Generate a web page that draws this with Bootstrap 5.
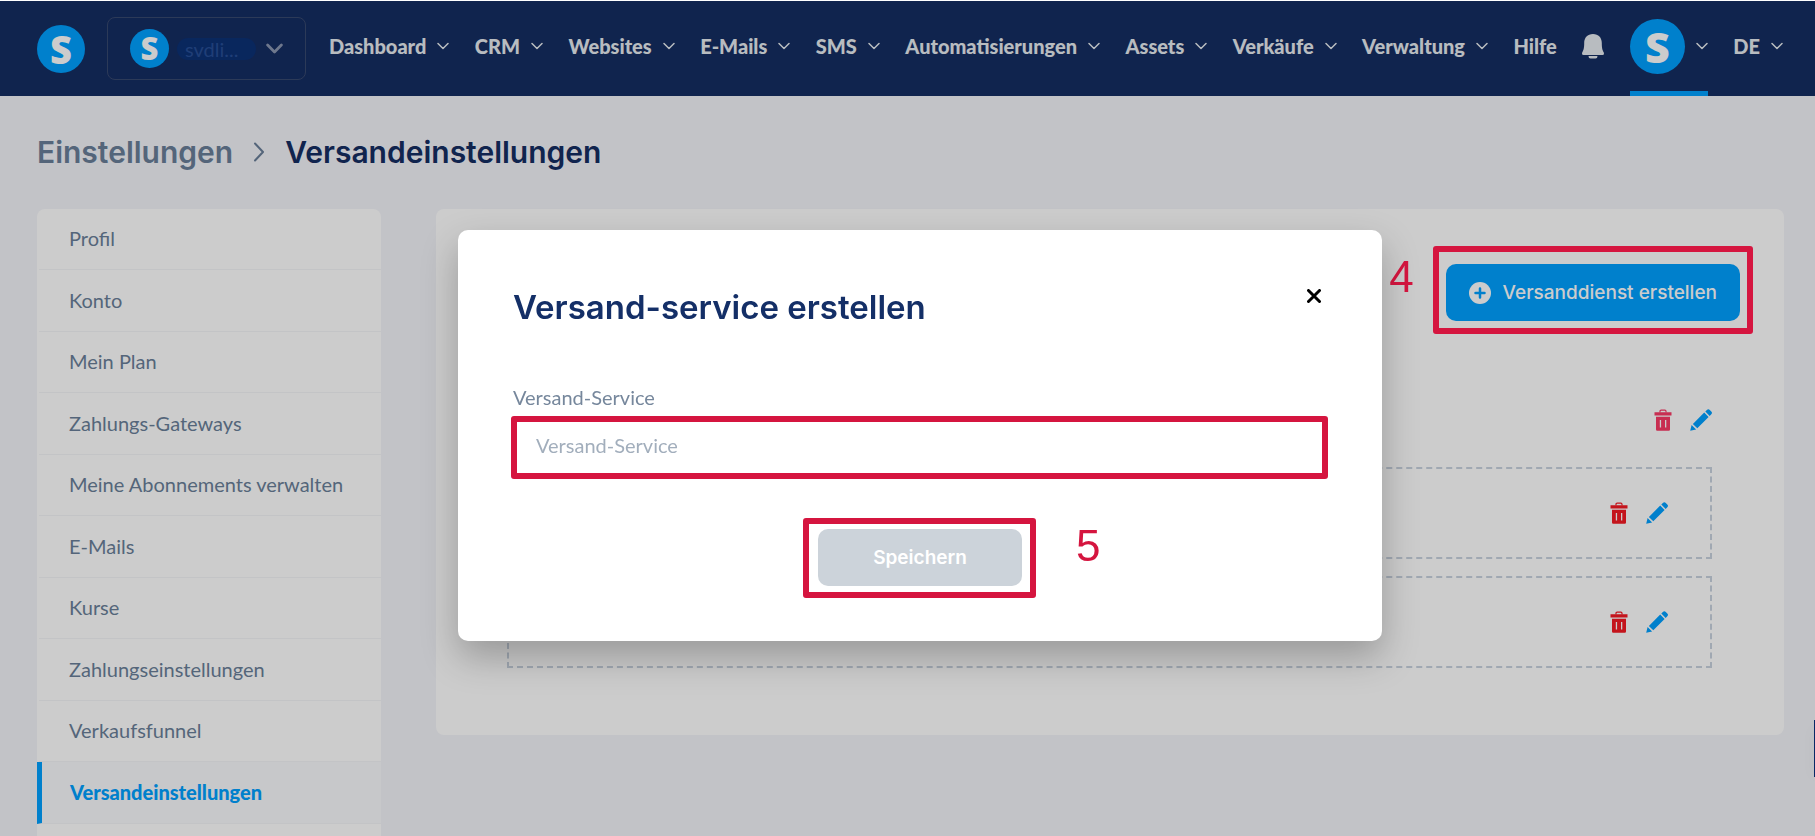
<!DOCTYPE html>
<html lang="de">
<head>
<meta charset="utf-8">
<meta name="viewport" content="width=device-width, initial-scale=1">
<title>Versandeinstellungen</title>
<link href="https://cdn.jsdelivr.net/npm/bootstrap@5.3.0/dist/css/bootstrap.min.css" rel="stylesheet">
<style>
  :root { --navy: #152d62; --sky: #00a0ff; --slate: #6a7f99; --marker: #d5153f; }
  body { font-family: Lato, "Open Sans", sans-serif; font-size: 20px; line-height: 28px; color: var(--slate); background: #f3f4f9; border-top: 1px solid #fff; height: 100vh; }

  .topbar { background: var(--navy); height: 95px; padding: 0 32px 0 37px; }
  .logo-disc { width: 48px; height: 48px; border-radius: 50%; background: var(--sky); color: #fff; font: 800 38px/1 "Open Sans", sans-serif; flex: none; }
  .logo-disc.disc-sm { width: 39px; height: 39px; font-size: 31px; }
  .logo-disc.disc-lg { width: 55px; height: 55px; font-size: 43px; }
  .workspace { width: 199px; height: 63px; border: 1px solid #38496f; border-radius: 8px; margin: 0 23px 0 22px; padding: 0 22px; background: none; flex: none; color: #274e95; }
  .workspace-name { background: #0c3175; border-radius: 11px; line-height: 22px; padding: 0 18px 0 8px; font-size: 20px; }
  .menu { padding-bottom: 5px; }
  .menu > li { display: flex; align-items: center; }
  .menu a { color: #e7ecf0; font-weight: 900; text-decoration: none; display: flex; align-items: center; gap: 11px; white-space: nowrap; }
  .account { position: relative; align-self: stretch; }
  .account::after { content: ""; position: absolute; left: 0; right: 0; bottom: -5px; height: 5px; background: var(--sky); }
  .chev { fill: none; stroke: currentColor; stroke-width: 2; stroke-linecap: round; stroke-linejoin: round; flex: none; }
  .menu .chev { stroke-width: 1.5; }

  .page { padding: 36px 31px 0 37px; }
  .crumbs { font: 600 30px/40px Inter, sans-serif; gap: 20px; margin-bottom: 37px; }
  .crumbs a { color: var(--slate); text-decoration: none; }
  .crumbs h1 { font: inherit; color: var(--navy); margin: 0; }
  .columns { gap: 55px; }
  .side { width: 344px; flex: none; background: #fff; border-radius: 8px; padding-bottom: 62px; margin-bottom: 0; }
  .side a { display: flex; align-items: center; height: 61px; padding: 0 0 2px 30px; margin-left: 2px; border-bottom: 1px solid #f4f6f8; color: var(--slate); text-decoration: none; }
  .side li:nth-child(even) a { height: 62px; }
  .side a.active { margin-left: 0; border-left: 5px solid var(--sky); padding-left: 28px; color: var(--sky); font-weight: 900; background: #f9fafd; }

  .panel { background: #fff; border-radius: 8px; padding: 55px 72px 67px 71px; }
  .panel-top { margin-right: -28px; margin-bottom: 88px; }
  .btn-create { background: var(--sky); color: #fff; font: 500 19px/25px Inter, sans-serif; height: 57px; padding: 0 23px; border: 0; border-radius: 10px; gap: 12px; }
  .tools { gap: 18px; }
  .tools button { border: 0; background: none; padding: 0; line-height: 0; color: #f51a23; }
  .tools button.edit { color: var(--sky); }
  .tools .soft { color: #fa3a66; }
  .slot { height: 92px; border: 2px dashed #c8d2df; padding: 0 42px; }
  .tools + .slot { margin-top: 36px; }
  .slot + .slot { margin-top: 17px; }

  .marker { position: absolute; border: 6px solid var(--marker); border-radius: 3px; pointer-events: none; z-index: 1054; }
  .marker-create { inset: -18px -13px -13px -13px; }
  .marker-field { inset: 0 -1px 0 -2px; }
  .marker-save { inset: -11px -14px -12px -15px; }
  .step { position: absolute; color: var(--marker); font: 400 44px/44px "Liberation Sans", Arial, sans-serif; z-index: 1054; }
  .step-create { right: 100%; top: -9px; margin-right: 32px; }
  .step-save { left: 100%; top: -5px; margin-left: 54px; }

  .shade { position: fixed; inset: 1px 0 0; background: rgba(0,0,0,.2); z-index: 1050; }
  .modal { padding-left: 25px; overflow: hidden; }
  .modal-dialog { max-width: 924px; margin: 230px auto 0; }
  .modal-content { border: 0; border-radius: 10px; padding: 54px 55px 55px; box-shadow: 0 16px 36px rgba(0,0,0,.25); }
  .modal-title { font: 600 33px/46px Inter, sans-serif; color: #142f67; }
  .close-x { border: 0; background: none; padding: 5px 6px; margin: 0 0 0 auto; line-height: 0; color: #000; }
  .field-label { color: #76879c; line-height: 28px; margin: 53px 0 5px; }
  .field { height: 63px; border: 0; padding: 0 23px 6px; font-size: 20px; color: var(--navy); }
  .field::placeholder { color: #a2aebc; }
  .btn-save { width: 204px; height: 57px; border: 0; border-radius: 10px; background: #ccd3da; color: #fff; font: 600 19px/25px Inter, sans-serif; }
  .save-row { margin-top: 50px; }
  .help-tab { position: fixed; right: 0; top: 720px; width: 1px; height: 57px; background: #0a3480; box-shadow: 0 4px 16px rgba(0,0,0,.25); }
</style>
</head>
<body class="overflow-hidden">
<svg class="d-none" aria-hidden="true">
  <symbol id="chev" viewBox="0 0 12 8"><path d="M1 1.500 6 6.500 11 1.500"/></symbol>
  <symbol id="trash" viewBox="0 0 18 22"><path fill="none" stroke="currentColor" stroke-width="1.200" d="M6 3.500V2.300Q6 1.200 7.100 1.200h3.800q1.100 0 1.100 1.100v1.200"/><path fill="currentColor" fill-rule="evenodd" d="M.5 3.200h17v3.300H.5zM2 7.800h14v12.700q0 1.200-1.200 1.200H3.200Q2 21.700 2 20.500zM5.800 11v7.500h1.300V11zm5.200 0v7.500h1.300V11z"/></symbol>
  <symbol id="pencil" viewBox="0 0 22 22"><path fill="currentColor" d="M.2 21.800 1.600 16l4.500 4.400zM2.900 14.900 14.200 3.600l4.400 4.400L7.300 19.300zM15.300 2.500l1.600-1.600q1.400-1.400 2.900 0l1.500 1.500q1.400 1.400 0 2.900l-1.600 1.600z"/></symbol>
</svg>

<header class="topbar d-flex align-items-center">
  <a href="#" class="logo-disc d-flex align-items-center justify-content-center text-decoration-none">S</a>
  <button type="button" class="workspace d-flex align-items-center">
    <span class="logo-disc disc-sm d-flex align-items-center justify-content-center">S</span>
    <span class="workspace-name ms-2">svdli...</span>
    <svg class="chev ms-auto text-white-50" width="17" height="11"><use href="#chev"/></svg>
  </button>
  <ul class="menu list-unstyled d-flex justify-content-between align-self-stretch flex-grow-1 mb-0">
    <li><a href="#">Dashboard <svg class="chev" width="12" height="8"><use href="#chev"/></svg></a></li>
    <li><a href="#">CRM <svg class="chev" width="12" height="8"><use href="#chev"/></svg></a></li>
    <li><a href="#">Websites <svg class="chev" width="12" height="8"><use href="#chev"/></svg></a></li>
    <li><a href="#">E-Mails <svg class="chev" width="12" height="8"><use href="#chev"/></svg></a></li>
    <li><a href="#">SMS <svg class="chev" width="12" height="8"><use href="#chev"/></svg></a></li>
    <li><a href="#">Automatisierungen <svg class="chev" width="12" height="8"><use href="#chev"/></svg></a></li>
    <li><a href="#">Assets <svg class="chev" width="12" height="8"><use href="#chev"/></svg></a></li>
    <li><a href="#">Verkäufe <svg class="chev" width="12" height="8"><use href="#chev"/></svg></a></li>
    <li><a href="#">Verwaltung <svg class="chev" width="12" height="8"><use href="#chev"/></svg></a></li>
    <li><a href="#">Hilfe</a></li>
    <li><a href="#" aria-label="Benachrichtigungen"><svg width="22" height="25" viewBox="0 0 22 25"><path fill="currentColor" d="M11 0C5.500 0 2.200 3.800 2.200 9c0 5-.6 7-1.900 9.200Q-.6 21 1.500 21h19q2.100 0 1.200-2.800C20.400 16 19.800 14 19.800 9c0-5.200-3.300-9-8.800-9zM6.500 22h9q0 2.600-2 2.600h-5q-2 0-2-2.600z"/></svg></a></li>
    <li class="account"><a href="#" aria-label="Profil"><span class="logo-disc disc-lg d-flex align-items-center justify-content-center">S</span><svg class="chev" width="12" height="8"><use href="#chev"/></svg></a></li>
    <li><a href="#">DE <svg class="chev" width="12" height="8"><use href="#chev"/></svg></a></li>
  </ul>
</header>

<main class="page">
  <nav class="crumbs d-flex align-items-center" aria-label="Pfad">
    <a href="#">Einstellungen</a>
    <svg class="chev" width="12" height="20" viewBox="0 0 12 20"><path d="M2 1.500 10 10 2 18.500"/></svg>
    <h1>Versandeinstellungen</h1>
  </nav>
  <div class="columns d-flex align-items-start">
    <ul class="side list-unstyled">
      <li><a href="#">Profil</a></li>
      <li><a href="#">Konto</a></li>
      <li><a href="#">Mein Plan</a></li>
      <li><a href="#">Zahlungs-Gateways</a></li>
      <li><a href="#">Meine Abonnements verwalten</a></li>
      <li><a href="#">E-Mails</a></li>
      <li><a href="#">Kurse</a></li>
      <li><a href="#">Zahlungseinstellungen</a></li>
      <li><a href="#">Verkaufsfunnel</a></li>
      <li><a href="#" class="active" aria-current="page">Versandeinstellungen</a></li>
    </ul>
    <section class="panel flex-grow-1">
      <div class="panel-top d-flex justify-content-end">
        <div class="position-relative">
          <span class="step step-create">4</span>
          <button type="button" class="btn-create d-flex align-items-center">
            <svg width="22" height="22" viewBox="0 0 22 22"><circle cx="11" cy="11" r="11" fill="#fff"/><path d="M11 6.500v9M6.500 11h9" stroke="#00a0ff" stroke-width="2.500" stroke-linecap="round"/></svg>
            Versanddienst erstellen
          </button>
          <span class="marker marker-create"></span>
        </div>
      </div>
      <div class="tools d-flex justify-content-end">
        <button type="button" class="soft" aria-label="Löschen"><svg width="18" height="22"><use href="#trash"/></svg></button>
        <button type="button" class="edit" aria-label="Bearbeiten"><svg width="22" height="22"><use href="#pencil"/></svg></button>
      </div>
      <div class="slot tools d-flex align-items-center justify-content-end">
        <button type="button" aria-label="Löschen"><svg width="18" height="22"><use href="#trash"/></svg></button>
        <button type="button" class="edit" aria-label="Bearbeiten"><svg width="22" height="22"><use href="#pencil"/></svg></button>
      </div>
      <div class="slot tools d-flex align-items-center justify-content-end">
        <button type="button" aria-label="Löschen"><svg width="18" height="22"><use href="#trash"/></svg></button>
        <button type="button" class="edit" aria-label="Bearbeiten"><svg width="22" height="22"><use href="#pencil"/></svg></button>
      </div>
    </section>
  </div>
</main>
<div class="help-tab"></div>
<div class="shade"></div>

<div class="modal d-block" tabindex="-1" role="dialog" aria-labelledby="dlg-title">
  <div class="modal-dialog">
    <form class="modal-content">
      <div class="d-flex align-items-start">
        <h2 id="dlg-title" class="modal-title">Versand-service erstellen</h2>
        <button type="button" class="close-x" aria-label="Schließen"><svg width="14" height="14" viewBox="0 0 14 14"><path d="M1.500 1.500l11 11M12.500 1.500l-11 11" stroke="currentColor" stroke-width="3" stroke-linecap="round"/></svg></button>
      </div>
      <label for="service" class="field-label">Versand-Service</label>
      <div class="position-relative">
        <input id="service" type="text" class="field w-100" placeholder="Versand-Service">
        <span class="marker marker-field"></span>
      </div>
      <div class="save-row d-flex justify-content-center">
        <div class="position-relative">
          <button type="submit" class="btn-save">Speichern</button>
          <span class="marker marker-save"></span>
          <span class="step step-save">5</span>
        </div>
      </div>
    </form>
  </div>
</div>
<script src="https://cdn.jsdelivr.net/npm/bootstrap@5.3.0/dist/js/bootstrap.bundle.min.js"></script>
</body>
</html>
